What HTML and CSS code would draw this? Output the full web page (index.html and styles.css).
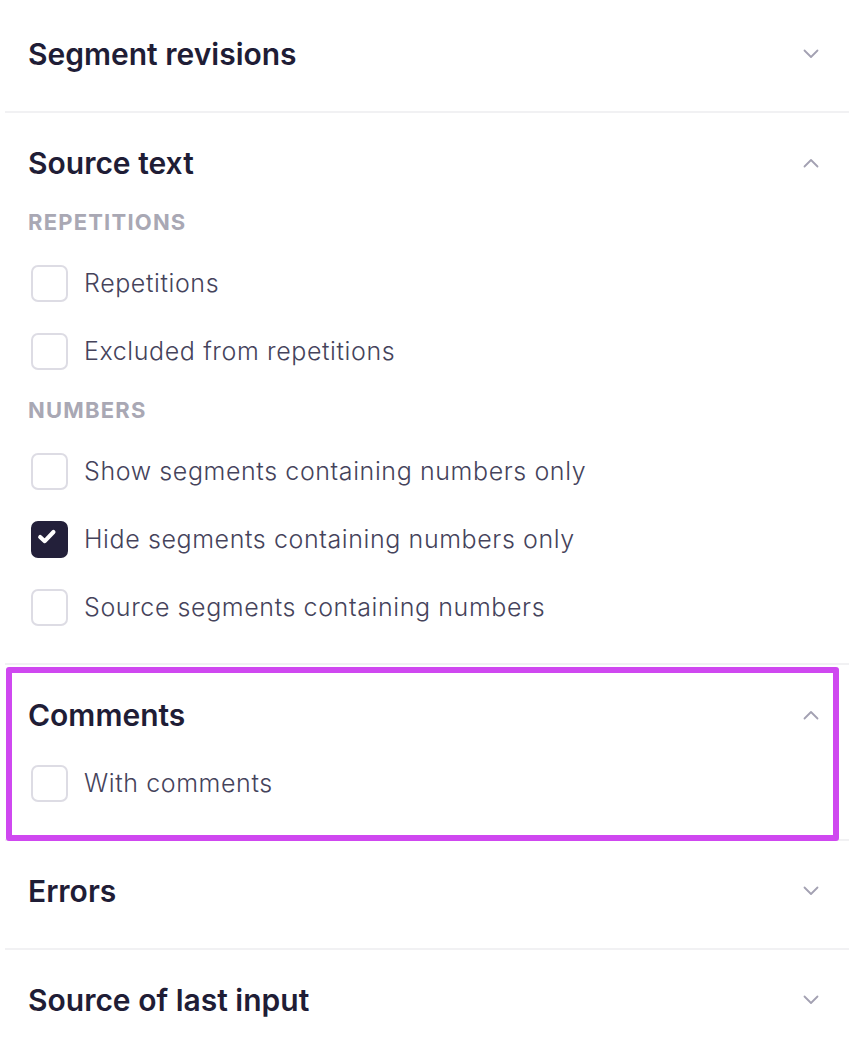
FILE: index.html
```html
<!DOCTYPE html>
<html lang="en">
<head>
    <meta charset="UTF-8">
    <meta name="viewport" content="width=device-width, initial-scale=1.0">
    <title>Filters</title>
    <link rel="stylesheet" href="styles.css">
</head>
<body>
    <div class="filter_wrap">
        <section class="panel">
            <div class="panel_head">
                <h2>Segment revisions</h2>
                <svg class="chev" viewBox="0 0 16 10"><path d="M1.5 1.5 L8 8 L14.5 1.5"/></svg>
            </div>
        </section>

        <section class="panel open">
            <div class="panel_head">
                <h2>Source text</h2>
                <svg class="chev" viewBox="0 0 16 10"><path d="M1.5 8.5 L8 2 L14.5 8.5"/></svg>
            </div>
            <div class="panel_body">
                <div class="group_label">Repetitions</div>
                <label class="check"><span class="box"></span>Repetitions</label>
                <label class="check"><span class="box"></span>Excluded from repetitions</label>
                <div class="group_label">Numbers</div>
                <label class="check"><span class="box"></span>Show segments containing numbers only</label>
                <label class="check"><span class="box on"><svg viewBox="0 0 36 36"><path d="M10 17.5 L15 22 L24.5 12"/></svg></span>Hide segments containing numbers only</label>
                <label class="check"><span class="box"></span>Source segments containing numbers</label>
            </div>
        </section>

        <section class="panel open marked">
            <div class="panel_head">
                <h2>Comments</h2>
                <svg class="chev" viewBox="0 0 16 10"><path d="M1.5 8.5 L8 2 L14.5 8.5"/></svg>
            </div>
            <div class="panel_body">
                <label class="check"><span class="box"></span>With comments</label>
            </div>
        </section>

        <section class="panel">
            <div class="panel_head">
                <h2>Errors</h2>
                <svg class="chev" viewBox="0 0 16 10"><path d="M1.5 1.5 L8 8 L14.5 1.5"/></svg>
            </div>
        </section>

        <section class="panel last">
            <div class="panel_head">
                <h2>Source of last input</h2>
                <svg class="chev" viewBox="0 0 16 10"><path d="M1.5 1.5 L8 8 L14.5 1.5"/></svg>
            </div>
        </section>
    </div>
</body>
</html>
```

FILE: styles.css
```css
* { margin: 0; padding: 0; box-sizing: border-box; }
body {
    background: #fff;
    font-family: Inter, "Noto Sans", sans-serif;
    color: #1f1d36;
}
.filter_wrap {
    margin-left: 5px;
    padding-top: 4px;
}
.panel {
    border-bottom: 2px solid #f1f1f3;
    position: relative;
}
.panel.last { border-bottom: none; }
.panel_head {
    display: flex;
    align-items: center;
    justify-content: space-between;
    padding: 33px 30px 40px 23px;
}
.panel.open .panel_head { padding-bottom: 0; }
.panel_head h2 {
    font-size: 30px;
    line-height: 34px;
    font-weight: 600;
    color: #1f1d36;
}
.chev {
    width: 16px;
    height: 10px;
    fill: none;
    stroke: #a3a1b2;
    stroke-width: 1.8;
    stroke-linecap: round;
    stroke-linejoin: round;
}
.panel_body {
    padding: 17px 0 22px 23px;
}
.group_label {
    font-size: 22px;
    line-height: 24px;
    font-weight: 700;
    letter-spacing: 1.2px;
    text-transform: uppercase;
    color: #a9a8b4;
    margin: 13px 0 15px;
}
.check {
    display: flex;
    align-items: center;
    height: 68px;
    padding-left: 3px;
    font-size: 25px;
    font-weight: 300;
    letter-spacing: 0.6px;
    color: #45435b;
}
.box {
    width: 37px;
    height: 37px;
    border: 2px solid #dddce4;
    border-radius: 7px;
    margin-right: 16px;
    flex: none;
}
.box.on {
    background: #23203a;
    border-color: #23203a;
}
.box svg {
    display: block;
    width: 33px;
    height: 33px;
    fill: none;
    stroke: #fff;
    stroke-width: 4.5;
    stroke-linecap: round;
    stroke-linejoin: round;
    margin: -2px 0 0 -2px;
}
/* highlight frame around the comments block */
.panel.marked::after {
    content: "";
    position: absolute;
    left: 1px;
    right: 10px;
    top: 2px;
    bottom: -2px;
    border: 6px solid #cf48f0;
    border-radius: 3px;
    pointer-events: none;
}
```
